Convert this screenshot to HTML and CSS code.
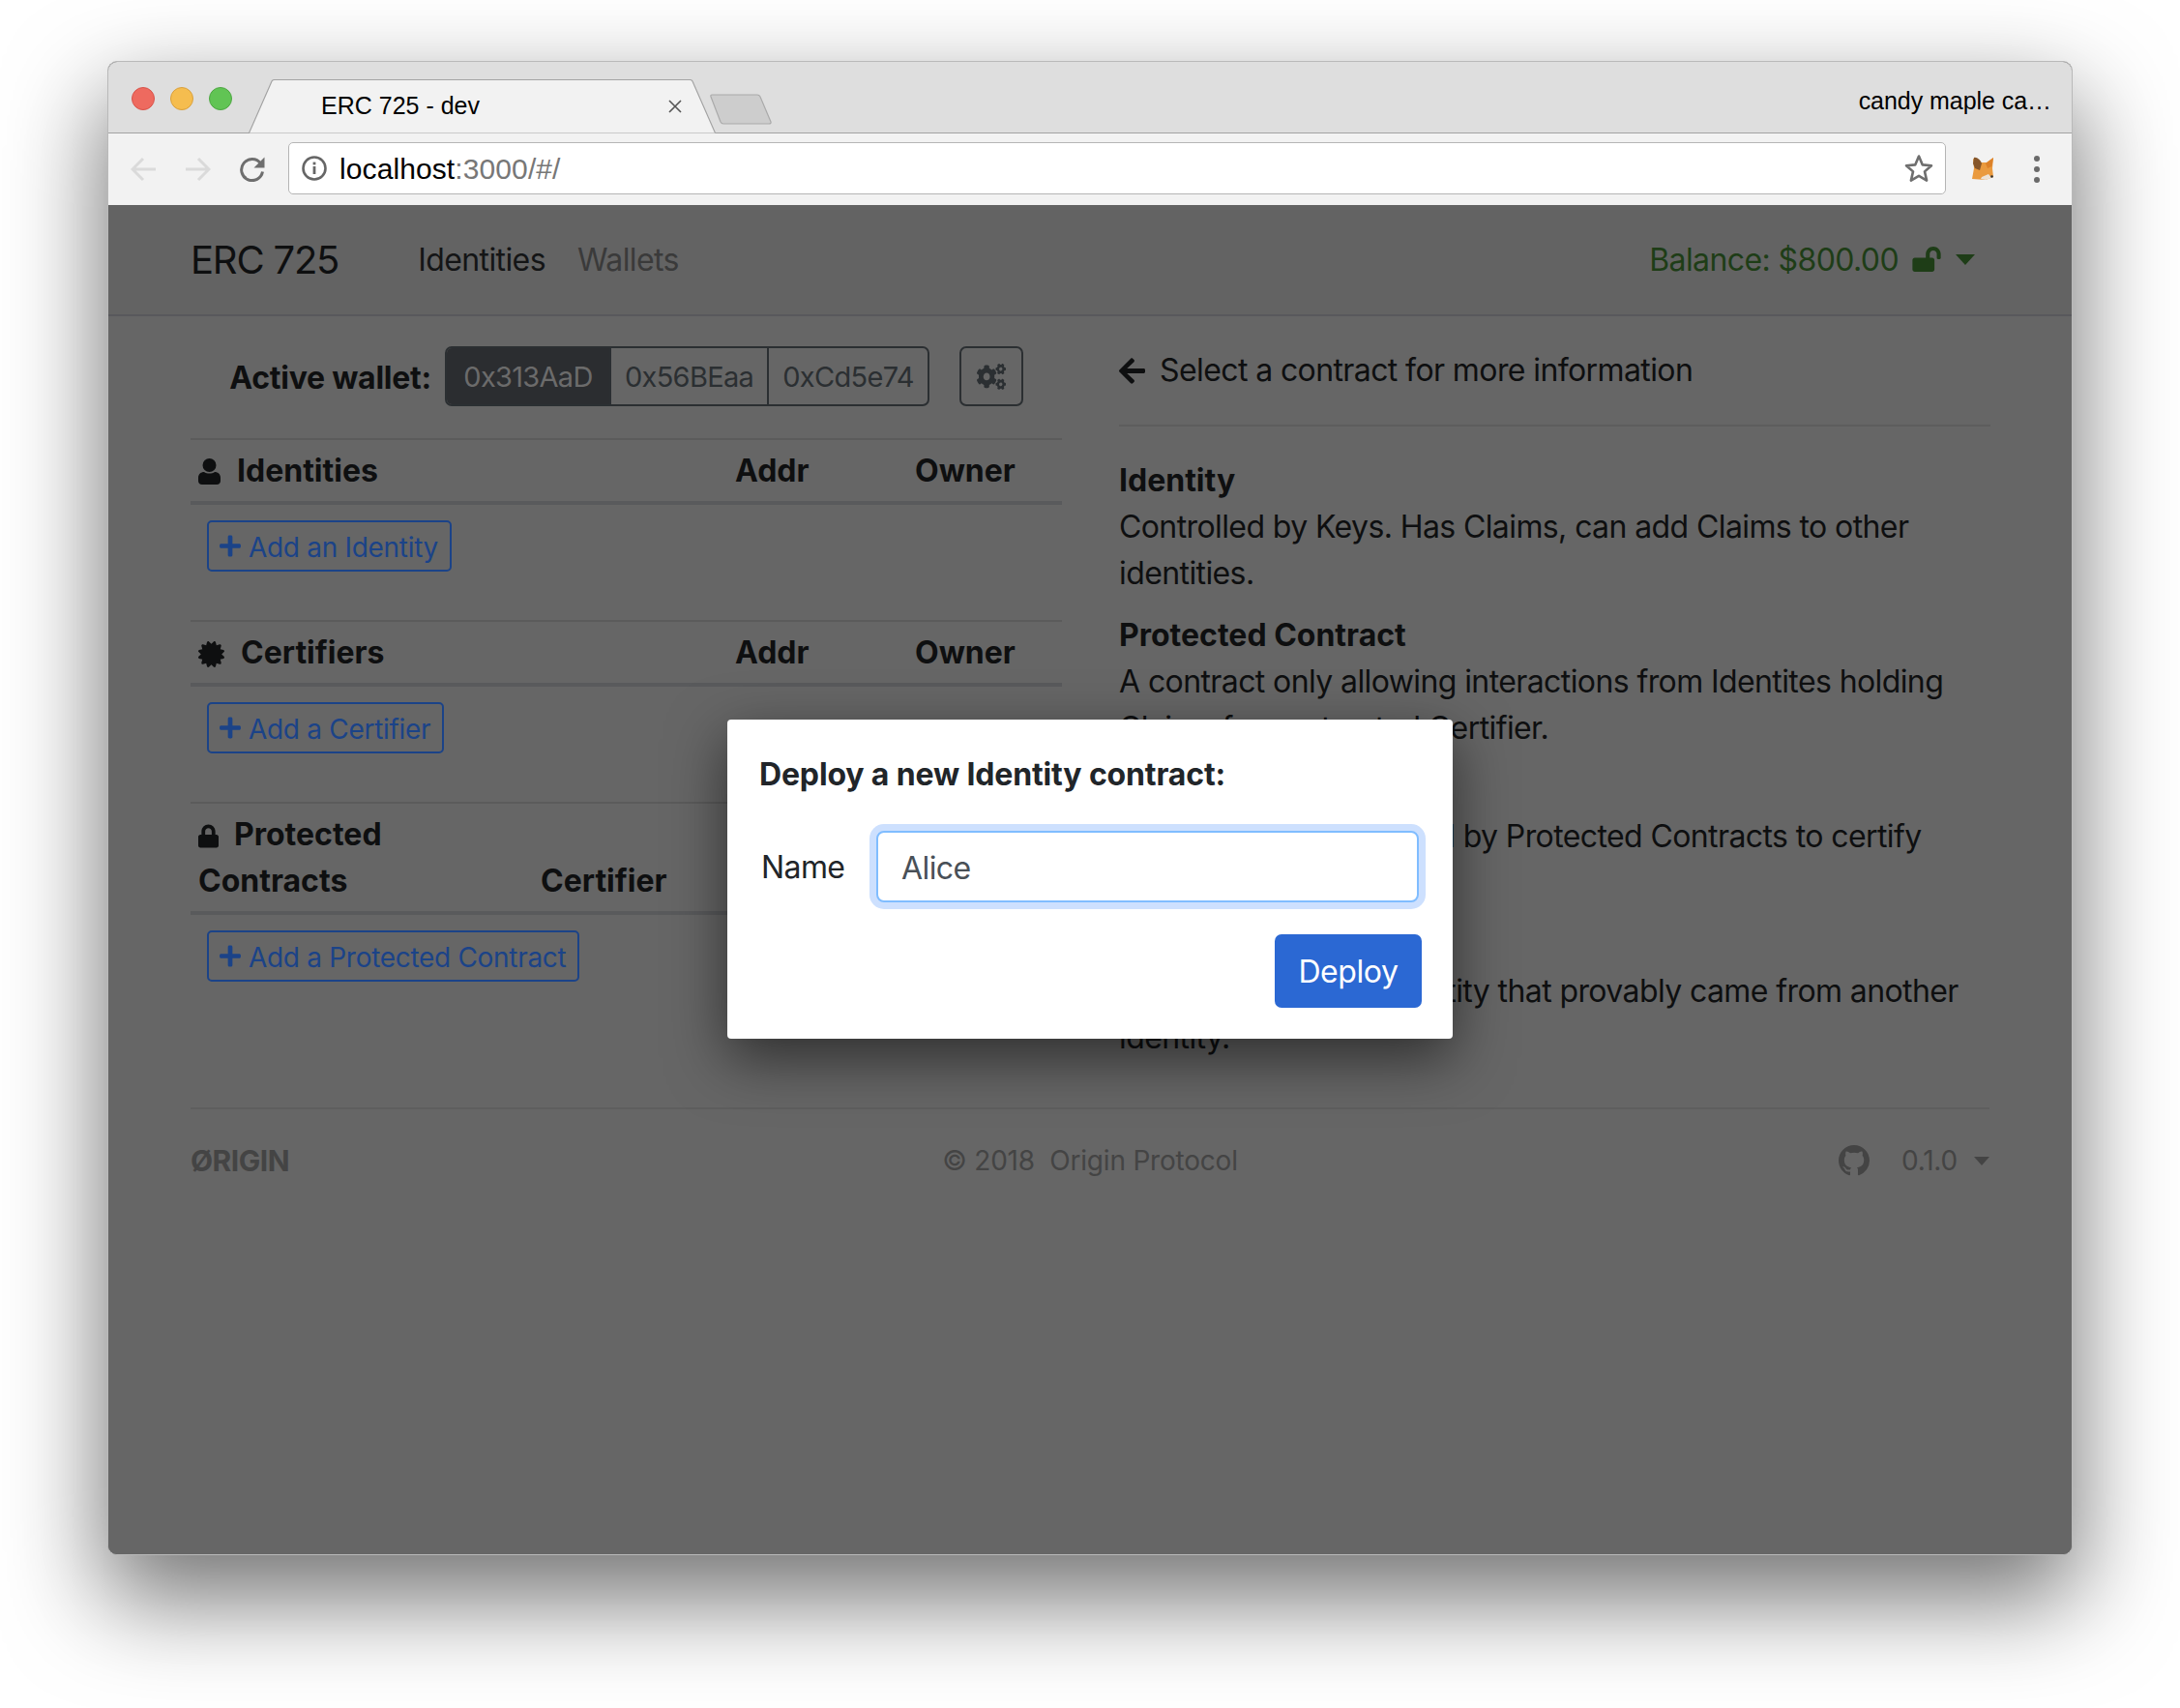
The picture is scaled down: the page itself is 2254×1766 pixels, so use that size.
FILE: index.html
```html
<!DOCTYPE html>
<html lang="en">
<head>
<meta charset="utf-8">
<title>ERC 725 - dev</title>
<link rel="stylesheet" href="styles.css">
</head>
<body>
<div class="window">
  <div class="tabstrip">
    <div class="lights">
      <span class="light red"></span><span class="light yellow"></span><span class="light green"></span>
    </div>
    <div class="tab">
      <svg class="tab-shape" viewBox="0 0 483 56" width="483" height="56"><path d="M0 55.5 H0.5 L24 2 Q25 0.5 27 0.5 H456 Q458 0.5 459 2 L482.5 55.5" fill="#f2f2f2" stroke="#a3a3a3" stroke-width="1.2"/></svg>
      <span class="tab-title">ERC 725 - dev</span>
      <svg class="tab-close" viewBox="0 0 14 14" width="14" height="14"><path d="M1 1 L13 13 M13 1 L1 13" stroke="#555" stroke-width="1.6"/></svg>
    </div>
    <svg class="newtab" viewBox="0 0 64 32" width="64" height="32"><path d="M2 1 H49 Q51 1 52 3 L63 29 Q63.5 31 61 31 H14 Q12 31 11 29 L1 3 Q0.5 1 2 1 Z" fill="#cdcdcd" stroke="#aaa" stroke-width="1.2"/></svg>
    <span class="profile">candy maple ca…</span>
  </div>
  <div class="toolbar">
    <svg class="tool-icon" viewBox="0 0 27 26" width="27" height="26"><path d="M26 13 H3 M13 2 L2 13 L13 24" fill="none" stroke="#dadada" stroke-width="3"/></svg>
    <svg class="tool-icon" viewBox="0 0 27 26" width="27" height="26"><path d="M1 13 H24 M14 2 L25 13 L14 24" fill="none" stroke="#dadada" stroke-width="3"/></svg>
    <svg class="tool-icon" viewBox="0 0 27 26" width="27" height="26"><path d="M22.5 7 A11 11 0 1 0 24.5 15.5" fill="none" stroke="#6e6e6e" stroke-width="3"/><path d="M26.5 0.5 V11.5 H15.5 Z" fill="#6e6e6e"/></svg>
    <div class="omnibox">
      <svg class="info" viewBox="0 0 26 26" width="26" height="26"><circle cx="13" cy="13" r="11.5" fill="none" stroke="#666" stroke-width="2.6"/><rect x="11.6" y="11" width="2.8" height="8" fill="#666"/><rect x="11.6" y="6.6" width="2.8" height="2.8" fill="#666"/></svg>
      <span class="url">localhost<span class="url-dim">:3000/#/</span></span>
      <svg class="star" viewBox="0 0 30 30" width="30" height="30"><path d="M15 2.5 L18.8 11.4 L28 12.2 L21 18.4 L23.1 27.6 L15 22.8 L6.9 27.6 L9 18.4 L2 12.2 L11.2 11.4 Z" fill="none" stroke="#6e6e6e" stroke-width="2.6" stroke-linejoin="round"/></svg>
    </div>
    <svg class="fox" viewBox="0 0 24 24" width="24" height="24">
      <path d="M2 2 L9 6 L16 6 L23 1 L22 12 L23 21 L15 24 L1 23 L3 12 Z" fill="#ea9a3e"/>
      <path d="M3 1 C6 0 10 4 11 7 L9 14 L4 12 L2 7 Z" fill="#86562a"/>
      <path d="M15 7 L23 1 L21.5 10 L17 12 Z" fill="#dc8129"/>
      <path d="M11 21 L18 18 L21 22 L15 24 L10 23 Z" fill="#ece2d6"/>
      <circle cx="21.5" cy="20.5" r="1.3" fill="#333"/>
    </svg>
    <div class="dots"><span class="dot"></span><span class="dot"></span><span class="dot"></span></div>
  </div>
  <div class="page">
    <nav class="navbar">
      <span class="brand">ERC 725</span>
      <a class="nav-link active">Identities</a>
      <a class="nav-link">Wallets</a>
      <div class="balance">
        <span>Balance: $800.00</span>
        <svg class="ico-open" viewBox="0 0 576 512" width="30" height="26"><path fill="currentColor" d="M423.5 0C339.5.3 272 69.5 272 153.5V224H48c-26.5 0-48 21.5-48 48v192c0 26.5 21.5 48 48 48h352c26.5 0 48-21.5 48-48V272c0-26.5-21.5-48-48-48h-48v-71.1c0-39.6 31.7-72.5 71.3-72.9 40-.4 72.7 32.1 72.7 72v80c0 13.3 10.7 24 24 24h32c13.3 0 24-10.7 24-24v-80C576 68 507.5-.3 423.5 0z"/></svg>
        <span class="caret caret-green"></span>
      </div>
    </nav>
    <main class="main">
      <section class="col">
        <div class="wallet-row">
          <span class="wallet-label">Active wallet:</span>
          <div class="btn-group">
            <span class="seg seg-active">0x313AaD</span>
            <span class="seg seg-mid">0x56BEaa</span>
            <span class="seg">0xCd5e74</span>
          </div>
          <span class="gear-btn">
            <svg viewBox="0 0 640 512" width="30" height="27" preserveAspectRatio="none"><path fill="currentColor" d="M512.1 191l-8.2 14.3c-3 5.3-9.4 7.5-15.1 5.4-11.8-4.4-22.6-10.7-32.1-18.6-4.6-3.8-5.8-10.5-2.8-15.7l8.2-14.3c-6.9-8-12.3-17.3-15.9-27.4h-16.5c-6 0-11.2-4.3-12.2-10.3-2-12-2.1-24.6 0-37.1 1-6 6.2-10.4 12.2-10.4h16.5c3.6-10.1 9-19.4 15.9-27.4l-8.2-14.3c-3-5.2-1.9-11.9 2.8-15.7 9.5-7.9 20.4-14.2 32.1-18.6 5.7-2.1 12.1.1 15.1 5.4l8.2 14.3c10.5-1.9 21.2-1.9 31.7 0L552 6.3c3-5.3 9.4-7.5 15.1-5.4 11.8 4.4 22.6 10.7 32.1 18.6 4.6 3.8 5.8 10.5 2.8 15.7l-8.2 14.3c6.9 8 12.3 17.3 15.9 27.4h16.5c6 0 11.2 4.3 12.2 10.3 2 12 2.1 24.6 0 37.1-1 6-6.2 10.4-12.2 10.4h-16.5c-3.6 10.1-9 19.4-15.9 27.4l8.2 14.3c3 5.2 1.9 11.9-2.8 15.7-9.5 7.9-20.4 14.2-32.1 18.6-5.7 2.1-12.1-.1-15.1-5.4l-8.2-14.3c-10.4 1.9-21.2 1.9-31.7 0zm-10.5-58.8c38.5 29.6 82.4-14.3 52.8-52.8-38.5-29.7-82.4 14.3-52.8 52.8zM386.3 286.1l33.7 16.8c10.1 5.8 14.5 18.1 10.5 29.1-8.9 24.2-26.4 46.4-42.6 65.8-7.4 8.9-20.2 11.1-30.3 5.3l-29.1-16.8c-16 13.7-34.6 24.6-54.9 31.7v33.6c0 11.6-8.3 21.6-19.7 23.6-24.6 4.2-50.4 4.4-75.9 0-11.5-2-20-11.9-20-23.6V418c-20.3-7.2-38.9-18-54.9-31.7L74 403c-10 5.8-22.9 3.6-30.3-5.3-16.2-19.4-33.3-41.6-42.2-65.7-4-10.9.4-23.2 10.5-29.1l33.3-16.8c-3.9-20.9-3.9-42.4 0-63.4L12 205.8c-10.1-5.8-14.6-18.1-10.5-29 8.9-24.2 26-46.4 42.2-65.8 7.4-8.9 20.2-11.1 30.3-5.3l29.1 16.8c16-13.7 34.6-24.6 54.9-31.7V57.1c0-11.5 8.2-21.5 19.6-23.5 24.6-4.2 50.5-4.4 76-.1 11.5 2 20 11.9 20 23.6v33.6c20.3 7.2 38.9 18 54.9 31.7l29.1-16.8c10-5.8 22.9-3.6 30.3 5.3 16.2 19.4 33.2 41.6 42.1 65.8 4 10.9.1 23.2-10 29.1l-33.7 16.8c3.9 21 3.9 42.5 0 63.5zm-117.6 21.1c59.2-77-28.7-164.9-105.7-105.7-59.2 77 28.7 164.9 105.7 105.7zm243.4 182.7l-8.2 14.3c-3 5.3-9.4 7.5-15.1 5.4-11.8-4.4-22.6-10.7-32.1-18.6-4.6-3.8-5.8-10.5-2.8-15.7l8.2-14.3c-6.9-8-12.3-17.3-15.9-27.4h-16.5c-6 0-11.2-4.3-12.2-10.3-2-12-2.1-24.6 0-37.1 1-6 6.2-10.4 12.2-10.4h16.5c3.6-10.1 9-19.4 15.9-27.4l-8.2-14.3c-3-5.2-1.9-11.9 2.8-15.7 9.5-7.9 20.4-14.2 32.1-18.6 5.7-2.1 12.1.1 15.1 5.4l8.2 14.3c10.5-1.9 21.2-1.9 31.7 0l8.2-14.3c3-5.3 9.4-7.5 15.1-5.4 11.8 4.4 22.6 10.7 32.1 18.6 4.6 3.8 5.8 10.5 2.8 15.7l-8.2 14.3c6.9 8 12.3 17.3 15.9 27.4h16.5c6 0 11.2 4.3 12.2 10.3 2 12 2.1 24.6 0 37.1-1 6-6.2 10.4-12.2 10.4h-16.5c-3.6 10.1-9 19.4-15.9 27.4l8.2 14.3c3 5.2 1.9 11.9-2.8 15.7-9.5 7.9-20.4 14.2-32.1 18.6-5.7 2.1-12.1-.1-15.1-5.4l-8.2-14.3c-10.4 1.9-21.2 1.9-31.7 0zM501.6 431c38.5 29.6 82.4-14.3 52.8-52.8-38.5-29.6-82.4 14.3-52.8 52.8z"/></svg>
          </span>
        </div>

        <div class="list">
          <div class="list-head cols-std">
            <div class="th"><svg class="ico-user" viewBox="0 0 23 27" width="23" height="27"><ellipse cx="11.5" cy="7" rx="7" ry="7" fill="currentColor"/><path fill="currentColor" d="M0 23 V20 C0 16 3 14 6 14 C9 16 14 16 17 14 C20 14 23 16 23 20 V23 C23 25.5 21.5 27 19 27 H4 C1.5 27 0 25.5 0 23 Z"/></svg>Identities</div>
            <div class="th">Addr</div>
            <div class="th">Owner</div>
          </div>
          <a class="add-btn"><svg class="ico-plus" viewBox="0 0 448 512" width="22" height="25"><path fill="currentColor" d="M416 208H272V64c0-17.67-14.33-32-32-32h-32c-17.67 0-32 14.33-32 32v144H32c-17.67 0-32 14.33-32 32v32c0 17.67 14.33 32 32 32h144v144c0 17.67 14.33 32 32 32h32c17.67 0 32-14.33 32-32V304h144c17.67 0 32-14.33 32-32v-32c0-17.67-14.33-32-32-32z"/></svg>Add an Identity</a>
        </div>

        <div class="list">
          <div class="list-head cols-std">
            <div class="th"><svg class="ico-cert" viewBox="0 0 512 512" width="27" height="27"><path fill="currentColor" d="M458.622 255.92l45.985-45.005c13.708-12.977 7.316-36.039-10.664-40.339l-62.65-15.99 17.661-62.015c4.991-17.838-11.829-34.663-29.661-29.671l-61.994 17.667-15.984-62.671C337.085.197 313.765-6.276 300.99 7.228L256 53.57 211.011 7.229c-12.63-13.351-36.047-7.234-40.325 10.668l-15.984 62.671-61.995-17.667C74.87 57.907 58.056 74.738 63.046 92.572l17.661 62.015-62.65 15.99C.069 174.878-6.31 197.944 7.392 210.915l45.985 45.005-45.985 45.004c-13.708 12.977-7.316 36.039 10.664 40.339l62.65 15.99-17.661 62.015c-4.991 17.838 11.829 34.663 29.661 29.671l61.994-17.667 15.984 62.671c4.439 18.575 27.696 24.018 40.325 10.668L256 458.61l44.989 46.001c12.5 13.488 35.987 7.486 40.325-10.668l15.984-62.671 61.994 17.667c17.836 4.994 34.651-11.837 29.661-29.671l-17.661-62.015 62.65-15.99c17.987-4.302 24.366-27.367 10.664-40.339l-45.984-45.004z"/></svg>Certifiers</div>
            <div class="th">Addr</div>
            <div class="th">Owner</div>
          </div>
          <a class="add-btn"><svg class="ico-plus" viewBox="0 0 448 512" width="22" height="25"><path fill="currentColor" d="M416 208H272V64c0-17.67-14.33-32-32-32h-32c-17.67 0-32 14.33-32 32v144H32c-17.67 0-32 14.33-32 32v32c0 17.67 14.33 32 32 32h144v144c0 17.67 14.33 32 32 32h32c17.67 0 32-14.33 32-32V304h144c17.67 0 32-14.33 32-32v-32c0-17.67-14.33-32-32-32z"/></svg>Add a Certifier</a>
        </div>

        <div class="list">
          <div class="list-head cols-prot">
            <div class="th th-wrap"><svg class="ico-lock" viewBox="0 0 448 512" width="21" height="25"><path fill="currentColor" d="M400 224h-24v-72C376 68.2 307.8 0 224 0S72 68.2 72 152v72H48c-26.5 0-48 21.5-48 48v192c0 26.5 21.5 48 48 48h352c26.5 0 48-21.5 48-48V272c0-26.5-21.5-48-48-48zm-104 0H152v-72c0-39.7 32.3-72 72-72s72 32.3 72 72v72z"/></svg>Protected Contracts</div>
            <div class="th th-end">Certifier</div>
          </div>
          <a class="add-btn add-btn-tight"><svg class="ico-plus" viewBox="0 0 448 512" width="22" height="25"><path fill="currentColor" d="M416 208H272V64c0-17.67-14.33-32-32-32h-32c-17.67 0-32 14.33-32 32v144H32c-17.67 0-32 14.33-32 32v32c0 17.67 14.33 32 32 32h144v144c0 17.67 14.33 32 32 32h32c17.67 0 32-14.33 32-32V304h144c17.67 0 32-14.33 32-32v-32c0-17.67-14.33-32-32-32z"/></svg>Add a Protected Contract</a>
        </div>
      </section>

      <section class="col col-info">
        <div class="hint">
          <svg class="ico-arrow" viewBox="0 0 448 512" width="27" height="31"><path fill="currentColor" d="M257.5 445.1l-22.2 22.2c-9.4 9.4-24.6 9.4-33.9 0L7 273c-9.4-9.4-9.4-24.6 0-33.9L201.4 44.7c9.4-9.4 24.6-9.4 33.9 0l22.2 22.2c9.5 9.5 9.3 25-.4 34.3L136.6 216H424c13.3 0 24 10.7 24 24v32c0 13.3-10.7 24-24 24H136.6l120.5 114.8c9.8 9.3 10 24.8.4 34.3z"/></svg>
          Select a contract for more information
        </div>
        <div class="rule"></div>
        <div class="def"><b class="def-term">Identity</b><p>Controlled by Keys. Has Claims, can add Claims to other identities.</p></div>
        <div class="def"><b class="def-term">Protected Contract</b><p>A contract only allowing interactions from Identites holding Claims from a trusted Certifier.</p></div>
        <div class="def"><b class="def-term">Certifier</b><p>May issue Claims. Used by Protected Contracts to certify Claims.</p></div>
        <div class="def"><b class="def-term">Claim</b><p>Some info from an identity that provably came from another identity.</p></div>
      </section>
    </main>
    <footer class="footer">
      <span class="logo">ØRIGIN</span>
      <span class="copy">© 2018 &nbsp;Origin Protocol</span>
      <div class="foot-right">
        <svg class="ico-gh" viewBox="0 0 16 16" width="32" height="32"><path fill="currentColor" d="M8 0C3.58 0 0 3.58 0 8c0 3.54 2.29 6.53 5.47 7.59.4.07.55-.17.55-.38 0-.19-.01-.82-.01-1.49-2.01.37-2.53-.49-2.69-.94-.09-.23-.48-.94-.82-1.13-.28-.15-.68-.52-.01-.53.63-.01 1.08.58 1.23.82.72 1.21 1.87.87 2.33.66.07-.52.28-.87.51-1.07-1.78-.2-3.64-.89-3.64-3.95 0-.87.31-1.59.82-2.15-.08-.2-.36-1.02.08-2.12 0 0 .67-.21 2.2.82.64-.18 1.32-.27 2-.27.68 0 1.36.09 2 .27 1.53-1.04 2.2-.82 2.2-.82.44 1.1.16 1.92.08 2.12.51.56.82 1.27.82 2.15 0 3.07-1.87 3.75-3.65 3.95.29.25.54.73.54 1.48 0 1.07-.01 1.93-.01 2.2 0 .21.15.46.55.38A8.013 8.013 0 0016 8c0-4.42-3.58-8-8-8z"/></svg>
        <span class="version">0.1.0</span>
        <span class="caret caret-grey"></span>
      </div>
    </footer>
    <div class="modal">
      <div class="modal-title">Deploy a new Identity contract:</div>
      <div class="form-row">
        <label class="form-label" for="name">Name</label>
        <input class="form-input" id="name" value="Alice">
      </div>
      <div class="modal-actions"><button class="deploy">Deploy</button></div>
    </div>
  </div>
</div>
</body>
</html>
```
FILE: styles.css
```css
* { box-sizing: border-box; }
html, body { margin: 0; padding: 0; background: #fff; }
body { height: 1766px; overflow: hidden; padding: 63px 0 0 111px; font-family: Inter, "Noto Sans", sans-serif; font-size: 32px; line-height: 48px; letter-spacing: -0.6px; color: #0e0f10; }
p { margin: 0; }

.window { width: 2032px; height: 1545px; display: flex; flex-direction: column; border: 1px solid #b9b9b9; border-radius: 10px; overflow: hidden; box-shadow: 0 42px 100px 4px rgba(0,0,0,.55); background: #666; }

.tabstrip { height: 74px; flex: none; display: flex; align-items: flex-end; background: #dedede; border-bottom: 1px solid #a3a3a3; font-family: "Liberation Sans", Arial, sans-serif; letter-spacing: 0; color: #000; }
.lights { display: flex; gap: 16px; align-self: flex-start; margin: 26px 0 0 24px; }
.light { width: 24px; height: 24px; border-radius: 50%; border: 1px solid; }
.red { background: #ee6a5f; border-color: #d8534a; }
.yellow { background: #f5bd4f; border-color: #d9a03c; }
.green { background: #61c454; border-color: #4ea743; }
.tab { position: relative; width: 483px; height: 56px; margin: 0 0 -1px 17px; display: flex; align-items: center; padding: 0 35px 0 75px; font-size: 25px; line-height: 28px; flex: none; }
.tab-shape { position: absolute; left: 0; top: 0; }
.tab-title { position: relative; top: -1px; }
.tab-close { position: relative; margin-left: auto; }
.newtab { flex: none; align-self: flex-start; margin: 33px 0 0 -6px; }
.profile { margin-left: auto; align-self: flex-start; margin-top: 25px; padding-right: 21px; font-size: 25px; line-height: 30px; letter-spacing: -0.05px; }

.toolbar { height: 74px; flex: none; display: flex; align-items: center; gap: 29px; padding-left: 23px; background: #f2f2f2; font-family: "Liberation Sans", Arial, sans-serif; letter-spacing: 0; }
.tool-icon { flex: none; }
.omnibox { width: 1714px; height: 54px; margin: -3px 0 0 -5px; display: flex; align-items: center; background: #fff; border: 1px solid #b5b5b5; border-radius: 5px; padding: 0 12px 0 13px; flex: none; }
.info { flex: none; }
.url { margin: 2px 0 0 13px; font-size: 30px; line-height: 34px; letter-spacing: 0.1px; color: #000; }
.url-dim { color: #777; }
.star { margin-left: auto; flex: none; }
.fox { flex: none; margin: -2px 0 0 -3px; }
.dots { display: flex; flex-direction: column; gap: 5px; margin-left: 12px; }
.dot { width: 6px; height: 6px; border-radius: 50%; background: #6a6a6a; }

.page { flex: 1; position: relative; display: flex; flex-direction: column; background: #666; }
.navbar { height: 115px; flex: none; display: flex; align-items: center; padding: 0 86px 0 85px; background: #636363; border-bottom: 2px solid #58585c; }
.brand { font-size: 40px; letter-spacing: -1.2px; margin-right: 58px; color: #0e0f10; }
.nav-link { color: #3a3a3a; margin-left: 24px; margin-right: 9px; }
.nav-link.active { color: #141516; }
.balance { margin-left: auto; display: flex; align-items: center; color: #1e3d17; padding-right: 14px; }
.ico-open { margin: -2px 0 0 14px; }
.caret { display: inline-block; width: 0; height: 0; border-left: 10px solid transparent; border-right: 10px solid transparent; }
.caret-green { border-top: 11px solid #1e3d17; margin: 0 0 0 15px; }
.caret-grey { border-top: 9px solid #444; border-left-width: 8px; border-right-width: 8px; margin-left: 17px; }

.main { display: flex; gap: 59px; padding: 31px 85px 32px 85px; }
.col { width: 901px; flex: none; }
.col-info { padding-top: 1px; }

.wallet-row { display: flex; align-items: center; justify-content: flex-end; height: 62px; margin-bottom: 33px; padding-right: 40px; }
.wallet-label { font-weight: 700; letter-spacing: -0.25px; margin: 3px 14px 0 0; white-space: nowrap; }
.btn-group { display: flex; height: 62px; border: 2px solid #2b2f32; border-radius: 7px; overflow: hidden; }
.seg { display: flex; align-items: center; justify-content: center; width: 166px; padding-top: 1px; color: #2b2f32; font-size: 29px; letter-spacing: -0.7px; border-left: 2px solid #2b2f32; white-space: nowrap; }
.seg:first-child { border-left: 0; }
.seg-active { width: 168px; background: #2b2d30; color: #6b6b6b; }
.seg-mid { width: 163px; }
.gear-btn { display: flex; align-items: center; justify-content: center; width: 66px; height: 62px; margin-left: 31px; border: 2px solid #2b2f32; border-radius: 7px; color: #2b2f32; }

.list { margin-bottom: 50px; }
.list:last-child { margin-bottom: 0; }
.list-head { display: grid; padding: 8px 8px 7px; border-top: 2px solid #5b5b5b; border-bottom: 4px solid #595a5c; font-weight: 700; letter-spacing: 0; }
.cols-std { grid-template-columns: 555px 186px 1fr; }
.cols-prot { grid-template-columns: 354px 1fr; }
.th { display: block; }
.th-wrap { width: 340px; }
.th-end { align-self: end; }
.ico-user, .ico-cert, .ico-lock { vertical-align: -3px; }
.ico-user { margin-right: 17px; }
.ico-cert { margin-right: 17px; vertical-align: -4px; }
.ico-lock { margin-right: 16px; }

.add-btn { display: inline-flex; align-items: center; height: 53px; margin: 16px 0 0 17px; padding: 2px 12px 0 11px; border: 2px solid #1b4388; border-radius: 5px; color: #1b4388; font-size: 28px; letter-spacing: -0.3px; white-space: nowrap; }
.add-btn-tight { margin-top: 16px; }
.ico-plus { margin: -2px 8px 0 0; flex: none; }

.hint { display: flex; align-items: center; color: #0e0f10; }
.ico-arrow { margin-right: 15px; flex: none; }
.rule { height: 2px; background: #5d5d5d; margin: 32px 0; }
.def { margin-bottom: 16px; }
.def-term { display: block; font-weight: 700; letter-spacing: 0; }

.footer { position: relative; display: flex; align-items: center; justify-content: space-between; height: 108px; margin: 0 85px; border-top: 2px solid #5e5e5e; font-size: 28px; letter-spacing: -0.2px; color: #444; }
.logo { font-weight: 700; font-size: 30px; letter-spacing: -0.5px; color: #444; }
.copy { position: absolute; left: 0; right: 0; text-align: center; }
.foot-right { display: flex; align-items: center; }
.ico-gh { margin-right: 2px; }
.version { margin-left: 31px; }

.modal { position: absolute; left: 640px; top: 532px; width: 750px; height: 330px; padding: 32px 32px 32px 33px; background: #fff; border-radius: 4px; box-shadow: 0 20px 60px rgba(0,0,0,.55); color: #212529; }
.modal-title { font-weight: 700; letter-spacing: -0.15px; padding-top: 1px; }
.form-row { display: flex; align-items: center; margin-top: 34px; }
.form-label { width: 121px; padding: 1px 0 0 2px; flex: none; }
.form-input { width: 561px; height: 74px; padding: 2px 24px 0 24px; border: 2px solid #80bdff; border-radius: 8px; box-shadow: 0 0 0 7px #cde0fe; outline: none; font: inherit; letter-spacing: inherit; color: #495057; background: #fff; }
.modal-actions { display: flex; justify-content: flex-end; margin-top: 33px; }
.deploy { width: 152px; height: 76px; padding: 2px 0 0; border: 0; border-radius: 7px; background: #2b68d3; color: #fff; font: inherit; letter-spacing: -0.4px; }
```
